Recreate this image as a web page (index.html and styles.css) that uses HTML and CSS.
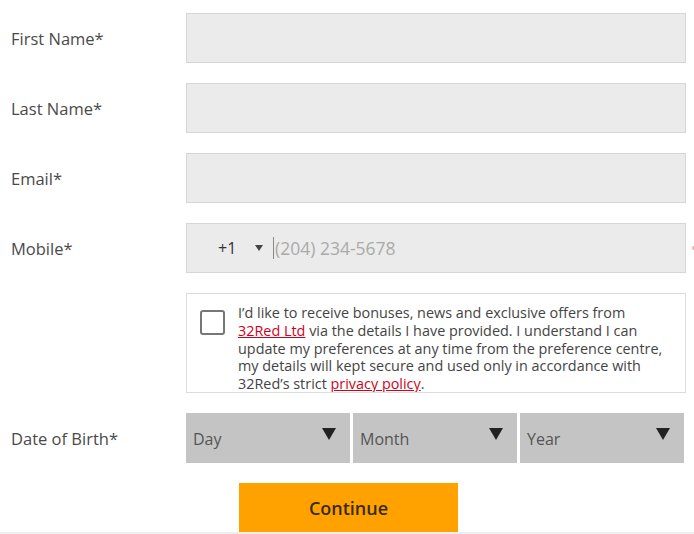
FILE: index.html
```html
<!DOCTYPE html>
<html>
<head>
<meta charset="utf-8">
<link rel="stylesheet" href="styles.css">
</head>
<body>
<form class="form">
  <div class="row">
    <label class="label">First Name*</label>
    <div class="input"></div>
  </div>
  <div class="row">
    <label class="label">Last Name*</label>
    <div class="input"></div>
  </div>
  <div class="row">
    <label class="label">Email*</label>
    <div class="input"></div>
  </div>
  <div class="row">
    <label class="label">Mobile*</label>
    <div class="input phone">
      <span class="code">+1</span>
      <span class="tri-small"></span>
      <span class="caret"></span>
      <span class="placeholder">(204) 234-5678</span>
    </div>
    <span class="dot"></span>
  </div>
  <div class="consent">
    <span class="checkbox"></span>
    <p class="consent-text">I’d like to receive bonuses, news and exclusive offers from<br><a class="link">32Red Ltd</a> via the details I have provided. I understand I can<br>update my preferences at any time from the preference centre,<br>my details will kept secure and used only in accordance with<br>32Red’s strict <a class="link">privacy policy</a>.</p>
  </div>
  <div class="row">
    <label class="label">Date of Birth*</label>
    <div class="selects">
      <div class="select"><span>Day</span><span class="tri"></span></div>
      <div class="select"><span>Month</span><span class="tri"></span></div>
      <div class="select"><span>Year</span><span class="tri"></span></div>
    </div>
  </div>
  <div class="actions">
    <button type="button" class="btn">Continue</button>
  </div>
</form>
</body>
</html>
```
FILE: styles.css
```css
html, body {
  margin: 0;
  padding: 0;
  background: #fff;
}
body {
  font-family: "Open Sans", "Liberation Sans", sans-serif;
  color: #444;
  width: 694px;
  height: 534px;
  overflow: hidden;
}
.form {
  padding-top: 13px;
}
.row {
  display: grid;
  grid-template-columns: 186px 500px 8px;
  align-items: center;
  height: 50px;
  margin-bottom: 20px;
}
.label {
  padding-left: 11px;
  font-size: 16.5px;
  color: #4a4a4a;
}
.input {
  box-sizing: border-box;
  height: 50px;
  background: #ebebeb;
  border: 1px solid #d6d6d6;
}
.phone {
  display: flex;
  align-items: center;
  padding-left: 31px;
}
.code {
  font-size: 16px;
  color: #333;
  width: 37px;
}
.tri-small {
  width: 0;
  height: 0;
  border-left: 4px solid transparent;
  border-right: 4px solid transparent;
  border-top: 6px solid #444;
  margin-right: 10px;
}
.caret {
  width: 1px;
  height: 22px;
  background: #888;
  margin-right: 1px;
}
.placeholder {
  font-size: 17.5px;
  color: #aaa;
}
.dot {
  width: 4px;
  height: 4px;
  border-radius: 50%;
  background: #e8b0a8;
  margin-left: 6px;
}
.consent {
  box-sizing: border-box;
  margin-left: 186px;
  width: 500px;
  height: 100px;
  border: 1px solid #dcdcdc;
  display: flex;
  align-items: flex-start;
  padding: 16px 0 0 13px;
  margin-bottom: 20px;
  overflow: hidden;
}
.checkbox {
  flex: none;
  box-sizing: border-box;
  width: 25px;
  height: 25px;
  border: 2px solid #777;
  border-radius: 3px;
  margin-right: 13px;
}
.consent-text {
  margin: -6px 0 0;
  width: 446px;
  white-space: nowrap;
  font-size: 14.4px;
  line-height: 17.8px;
  color: #444;
}
.link {
  color: #d0021b;
  text-decoration: underline;
}
.selects {
  display: flex;
  gap: 3px;
  height: 50px;
}
.select {
  box-sizing: border-box;
  width: 164px;
  height: 50px;
  background: #c4c4c4;
  display: flex;
  align-items: center;
  justify-content: space-between;
  padding: 0 14px 0 7px;
  font-size: 16px;
  color: #555;
}
.select span:first-child {
  padding-top: 2px;
}
.tri {
  width: 0;
  height: 0;
  border-left: 7px solid transparent;
  border-right: 7px solid transparent;
  border-top: 12px solid #222;
  margin-top: -8px;
}
.actions {
  border-bottom: 2px solid #eee;
  height: 49px;
}
.btn {
  display: block;
  margin-left: 239px;
  width: 219px;
  height: 49px;
  border: none;
  background: #ffa200;
  font-family: "Open Sans", "Liberation Sans", sans-serif;
  font-size: 18px;
  font-weight: 600;
  color: #3a2a10;
  padding: 0;
}
```
